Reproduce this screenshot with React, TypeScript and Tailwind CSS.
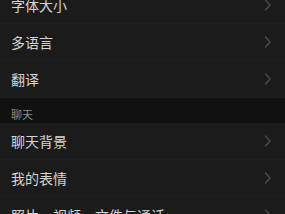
import React from 'react';

const font = { fontFamily: '"Noto Sans CJK SC", "Noto Sans", sans-serif' };

function Row({ label }: { label: string }) {
  return (
    <div className="flex h-[37px] items-center justify-between border-b border-[#202020] bg-[#1b1b1b] pl-[11px] pr-[14px]">
      <span className="text-[14px] leading-none text-[#d4d4d4]">{label}</span>
      <svg width="7" height="12" viewBox="0 0 7 12" fill="none" className="text-[#505050]">
        <path d="M1.5 1l4.5 5-4.5 5" stroke="currentColor" strokeWidth="1.2" strokeLinecap="round" strokeLinejoin="round" />
      </svg>
    </div>
  );
}

export default function App() {
  return (
    <div className="h-[214px] w-[285px] overflow-hidden bg-[#1b1b1b]" style={font}>
      <div className="-mt-[13px]">
        <Row label="字体大小" />
        <Row label="多语言" />
        <Row label="翻译" />
        <div className="flex h-[25px] items-end bg-[#111111] pb-[3px] pl-[11px]">
          <span className="text-[11px] leading-none text-[#8c8c8c]">聊天</span>
        </div>
        <Row label="聊天背景" />
        <Row label="我的表情" />
        <Row label="照片、视频、文件与通话" />
      </div>
    </div>
  );
}
